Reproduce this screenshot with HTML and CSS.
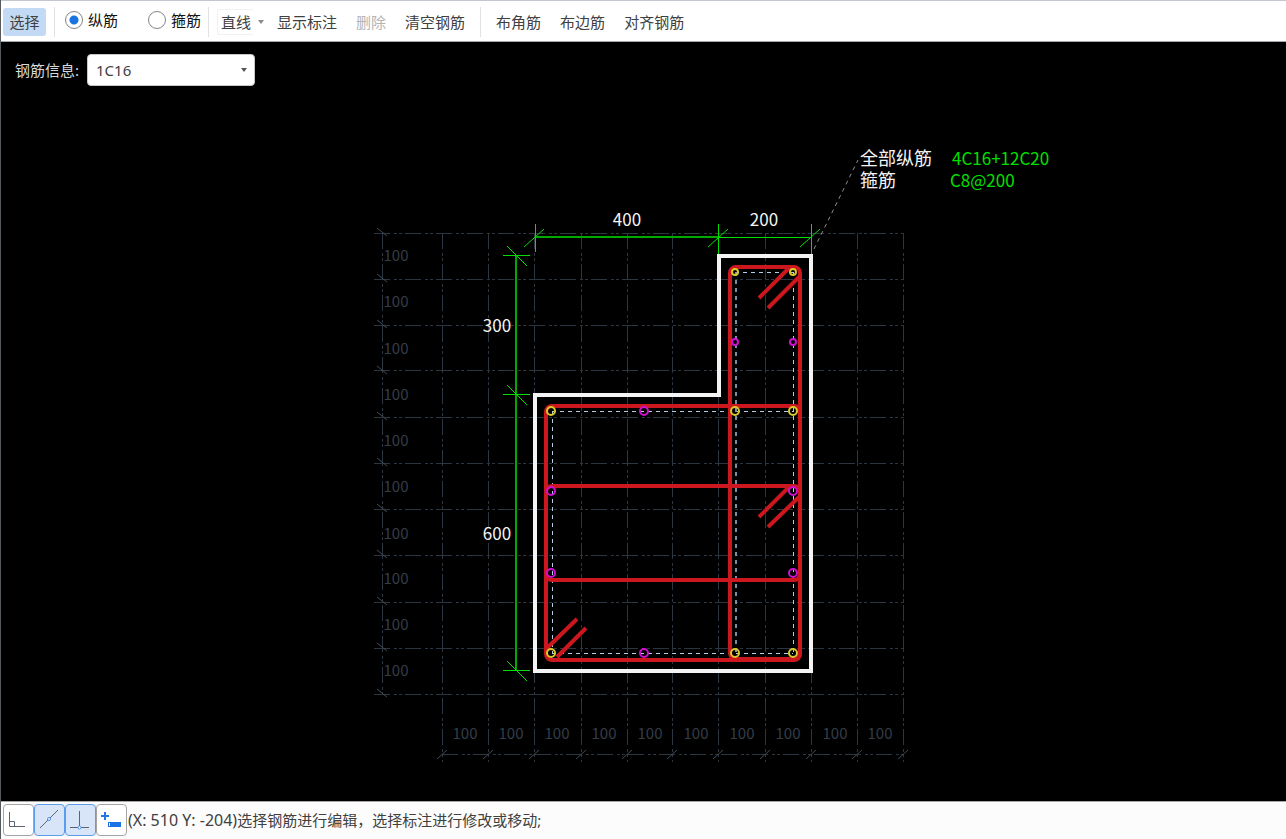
FILE: index.html
```html
<!DOCTYPE html>
<html lang="zh-CN">
<head>
<meta charset="utf-8">
<title>截面钢筋编辑</title>
<link rel="stylesheet" href="styles.css">
</head>
<body>
<div class="app">
  <header class="toolbar">
    <button class="tool tool-active" type="button">选择</button>
    <span class="sep sep-radio"></span>
    <label class="radio"><input type="radio" name="bar" checked><span>纵筋</span></label>
    <label class="radio radio-last"><input type="radio" name="bar"><span>箍筋</span></label>
    <span class="sep"></span>
    <button class="tool tool-drop" type="button"><span class="drop-text">直线</span><span class="caret"></span></button>
    <button class="tool" type="button">显示标注</button>
    <button class="tool" type="button" disabled>删除</button>
    <button class="tool" type="button">清空钢筋</button>
    <span class="sep sep-group"></span>
    <button class="tool" type="button">布角筋</button>
    <button class="tool" type="button">布边筋</button>
    <button class="tool" type="button">对齐钢筋</button>
  </header>

  <main class="canvas">
    <svg class="drawing" viewBox="1 42 1285 759" preserveAspectRatio="xMidYMid meet" role="img" aria-label="柱截面配筋图">
      <g class="grid">
        <path d="M374 233.5H904M374 279.5H904M374 325.5H904M374 370.5H904M374 417.5H904M374 463.5H904M374 509.5H904M374 555.5H904M374 602.5H904M374 648.5H904M374 694.5H904M442 754.5H904"/>
        <path d="M442.5 233V762M488.5 233V762M534.5 233V762M581.5 233V762M627.5 233V762M672.5 233V762M718.5 233V762M765.5 233V762M811.5 233V762M857.5 233V762M903.5 233V762M382.5 233V694"/>
      </g>
      <path class="grid-tick" d="M377 228l10 8M377 274l10 8M377 320l10 8M377 366l10 8M377 412l10 8M377 458l10 8M377 504l10 8M377 550l10 8M377 597l10 8M377 643l10 8M377 689l10 8"/>
      <path class="grid-tick" d="M437 759l10-9M483 759l10-9M529 759l10-9M576 759l10-9M622 759l10-9M667 759l10-9M713 759l10-9M760 759l10-9M806 759l10-9M852 759l10-9M898 759l10-9"/>
      <g class="grid-text">
        <text x="396" y="261">100</text><text x="396" y="307">100</text><text x="396" y="354">100</text><text x="396" y="400">100</text><text x="396" y="446">100</text><text x="396" y="492">100</text><text x="396" y="539">100</text><text x="396" y="584">100</text><text x="396" y="630">100</text><text x="396" y="676">100</text>
        <text x="465" y="739">100</text><text x="511" y="739">100</text><text x="557" y="739">100</text><text x="604" y="739">100</text><text x="650" y="739">100</text><text x="696" y="739">100</text><text x="742" y="739">100</text><text x="788" y="739">100</text><text x="835" y="739">100</text><text x="880" y="739">100</text>
      </g>

      <path class="leader" d="M814 249L858 160"/>
      <path class="outline" d="M535 395H719V256H811V671H535Z"/>

      <g class="dim">
        <path class="dim-line" d="M535 237H719M516 256V671"/>
        <path d="M718 237.5H811M535.5 224V252M718.5 224V254M811.5 224V254M503 255.5H530M503 394.5H530M503 670.5H530"/>
        <path d="M524 247l20-18M708 247l20-18M800 247l20-18M507 246l20 20M507 385l20 20M507 661l20 20"/>
      </g>
      <g class="dim-text">
        <text x="627" y="226">400</text><text x="764" y="226">200</text><text x="497" y="332">300</text><text x="497" y="540">600</text>
      </g>

      <path class="axis" d="M552.5 411V653M793.5 272V653M735 272.5H793M552 411.5H793M552 653.5H793"/>
      <path class="axis axis-bold" d="M736 272V653"/>

      <g class="stirrup">
        <rect x="730" y="267" width="70" height="392" rx="6"/>
        <rect x="546" y="406" width="254" height="254" rx="6"/>
        <rect x="546" y="486" width="254" height="94" rx="6"/>
        <path d="M790 267L759 298M799 277L768 308M790 486L759 517M799 497L768 527M547 648L577 619M557 657L586 628"/>
      </g>

      <g class="bar-corner">
        <circle cx="735" cy="272" r="3"/><circle cx="793" cy="272" r="3"/>
        <circle cx="551" cy="411" r="4"/><circle cx="735" cy="411" r="4"/><circle cx="793" cy="411" r="4"/>
        <circle cx="551" cy="653" r="4"/><circle cx="735" cy="653" r="4"/><circle cx="793" cy="653" r="4"/>
      </g>
      <g class="bar-side">
        <circle cx="735" cy="342" r="3"/><circle cx="793" cy="342" r="3"/>
        <circle cx="644" cy="411" r="4"/><circle cx="644" cy="653" r="4"/>
        <circle cx="551" cy="491" r="4"/><circle cx="793" cy="491" r="4"/>
        <circle cx="551" cy="573" r="4"/><circle cx="793" cy="573" r="4"/>
      </g>

      <text class="note"><tspan x="860" y="165">全部纵筋</tspan><tspan x="860" y="187">箍筋</tspan></text>
      <text class="note note-value"><tspan x="952" y="165">4C16+12C20</tspan><tspan x="950" y="187">C8@200</tspan></text>
    </svg>

    <div class="info">
      <label for="bar-info">钢筋信息:</label>
      <span class="combo">
        <select id="bar-info"><option>1C16</option></select>
        <span class="caret combo-caret"></span>
      </span>
    </div>
  </main>

  <footer class="status">
    <button class="snap" type="button" aria-label="正交">
      <svg viewBox="0 0 29 30"><path class="ink" d="M5.500 7V21.500H21M5.500 16.500H10.500V21.500"/></svg>
    </button>
    <button class="snap snap-on" type="button" aria-label="中点">
      <svg viewBox="0 0 29 30"><path class="ink" d="M5 23L23 5"/><circle class="node" cx="14" cy="14" r="1.500"/></svg>
    </button>
    <button class="snap snap-on" type="button" aria-label="垂足">
      <svg viewBox="0 0 29 30"><path class="ink" d="M13.500 6V22.500M4 22.500H23"/><circle class="node" cx="13.500" cy="22.500" r="1.500"/></svg>
    </button>
    <button class="snap" type="button" aria-label="动态输入">
      <svg viewBox="0 0 29 30"><path class="plus" d="M4 11H12M8 7V15"/><rect class="field" x="11" y="17" width="13" height="5"/><path class="field-mark" d="M12.500 18V21"/></svg>
    </button>
    <span class="status-text"><span class="coords">(X: 510 Y: -204)</span>选择钢筋进行编辑，选择标注进行修改或移动;</span>
  </footer>
</div>
</body>
</html>
```
FILE: styles.css
```css
* { box-sizing: border-box; }

body {
  margin: 0;
  font-family: "Noto Sans", "Noto Sans CJK SC", sans-serif;
  font-size: 15px;
  line-height: 20px;
  color: #404040;
}

button, select {
  font: inherit;
  color: inherit;
}

.app {
  display: flex;
  flex-direction: column;
  height: 100vh;
  border-left: 1px solid #555a5e;
}

.toolbar {
  display: flex;
  align-items: center;
  height: 42px;
  padding: 4px 2px 2px;
  background: #fff;
  border-top: 1px solid #c3c8ce;
  border-bottom: 1px solid #a4a8ac;
}

.tool {
  height: 28px;
  margin: 0 5px 0 4px;
  padding: 0 5px;
  border: 0;
  border-radius: 3px;
  background: none;
  white-space: nowrap;
}

.tool:disabled { color: #b4b4b4; }

.tool-active {
  width: 43px;
  margin: 0 8px 0 0;
  background: #c2daf3;
}

.sep {
  flex: none;
  width: 1px;
  height: 30px;
  background: #e2e2e2;
}

.sep-group { margin: 0 6px 0 5px; }
.sep-radio { margin-right: 10px; }

.radio {
  display: flex;
  gap: 5px;
  align-items: center;
  margin-right: 30px;
  padding-bottom: 5px;
  color: #111;
  white-space: nowrap;
}

.radio-last { margin-right: 7px; }

.radio input {
  appearance: none;
  width: 18px;
  height: 18px;
  margin: 0;
  border: 1px solid #858585;
  border-radius: 50%;
  background: #fff;
}

.radio input:checked {
  background: radial-gradient(circle, #1a73e0 0 4px, #fff 5px);
}

.tool-drop {
  display: flex;
  gap: 4px;
  align-items: center;
  margin: 0 4px 0 8px;
  padding: 0;
}

.drop-text {
  padding: 2px 3px;
  border: 1px solid #f1f1f1;
  border-right: 0;
  border-radius: 3px;
}

.caret {
  width: 0;
  height: 0;
  border: 3px solid transparent;
  border-top: 4px solid #8a8a8a;
  border-bottom: 0;
}

.canvas {
  position: relative;
  flex: 1;
  min-height: 0;
  background: #000;
}

.drawing {
  display: block;
  width: 100%;
  height: 100%;
}

.info {
  position: absolute;
  top: 12px;
  left: 14px;
  display: flex;
  gap: 8px;
  align-items: center;
  color: #d8d8d8;
}

.combo {
  display: grid;
  align-items: center;
  width: 168px;
}

.combo select {
  grid-area: 1 / 1;
  appearance: none;
  height: 32px;
  padding: 0 8px;
  border: 1px solid #c8c8c8;
  border-radius: 4px;
  background: #fff;
  color: #404040;
}

.combo-caret {
  grid-area: 1 / 1;
  justify-self: end;
  margin-right: 8px;
  border-top-color: #50565c;
  pointer-events: none;
}

.drawing path, .drawing rect, .drawing circle { fill: none; }

.grid {
  stroke: #2c3640;
  stroke-width: 1px;
  stroke-dasharray: 16 4 3 2 3 3;
}

.grid-tick { stroke: #414c57; }

.grid-text, .dim-text, .note {
  font-family: "Noto Sans CJK SC", sans-serif;
}

.grid-text {
  fill: #333d48;
  font-size: 15px;
  text-anchor: middle;
}

.dim-text {
  fill: #f4f4f4;
  font-size: 17px;
  text-anchor: middle;
}

.note {
  fill: #f4f4f4;
  font-size: 18px;
}

.note-value {
  fill: #00e000;
  font-size: 17px;
}

.leader {
  stroke: #8c8c8c;
  stroke-dasharray: 4 4;
}

.outline {
  stroke: #f4f4f4;
  stroke-width: 4px;
}

.dim { stroke: #00e000; }

.dim .dim-line {
  stroke: #00a800;
  stroke-width: 2px;
}

.axis {
  stroke: #b4cce4;
  stroke-dasharray: 4 4;
}

.axis-bold {
  stroke: #7890a8;
  stroke-width: 2px;
}

.stirrup {
  stroke: #cc171e;
  stroke-width: 4px;
}

.bar-corner, .bar-side { stroke-width: 2px; }
.bar-corner { stroke: #d8c828; }
.bar-side { stroke: #d010d0; }

.status {
  display: flex;
  gap: 1px;
  align-items: center;
  height: 38px;
  padding: 0 2px 1px;
  background: #fcfcfc;
  border-top: 1px solid #a8a8a8;
}

.snap {
  flex: none;
  width: 31px;
  height: 32px;
  margin-right: -1px;
  padding: 0;
  border: 1px solid #a4a4a4;
  border-radius: 4px;
  background: #fff;
}

.snap-on {
  border-color: #5b9cec;
  background: #d8e5f8;
}

.snap svg {
  display: block;
  width: 29px;
  height: 30px;
}

.snap svg * { fill: none; }
.snap .ink { stroke: #5c6470; }
.snap .node { fill: #fff; stroke: #4a90f0; }
.snap .plus { stroke: #2078e4; stroke-width: 2px; }
.snap .field { fill: #1a73e4; }
.snap .field-mark { stroke: #fff; }

.status-text {
  padding-left: 1px;
  white-space: nowrap;
}

.coords { font-size: 16px; }
```
